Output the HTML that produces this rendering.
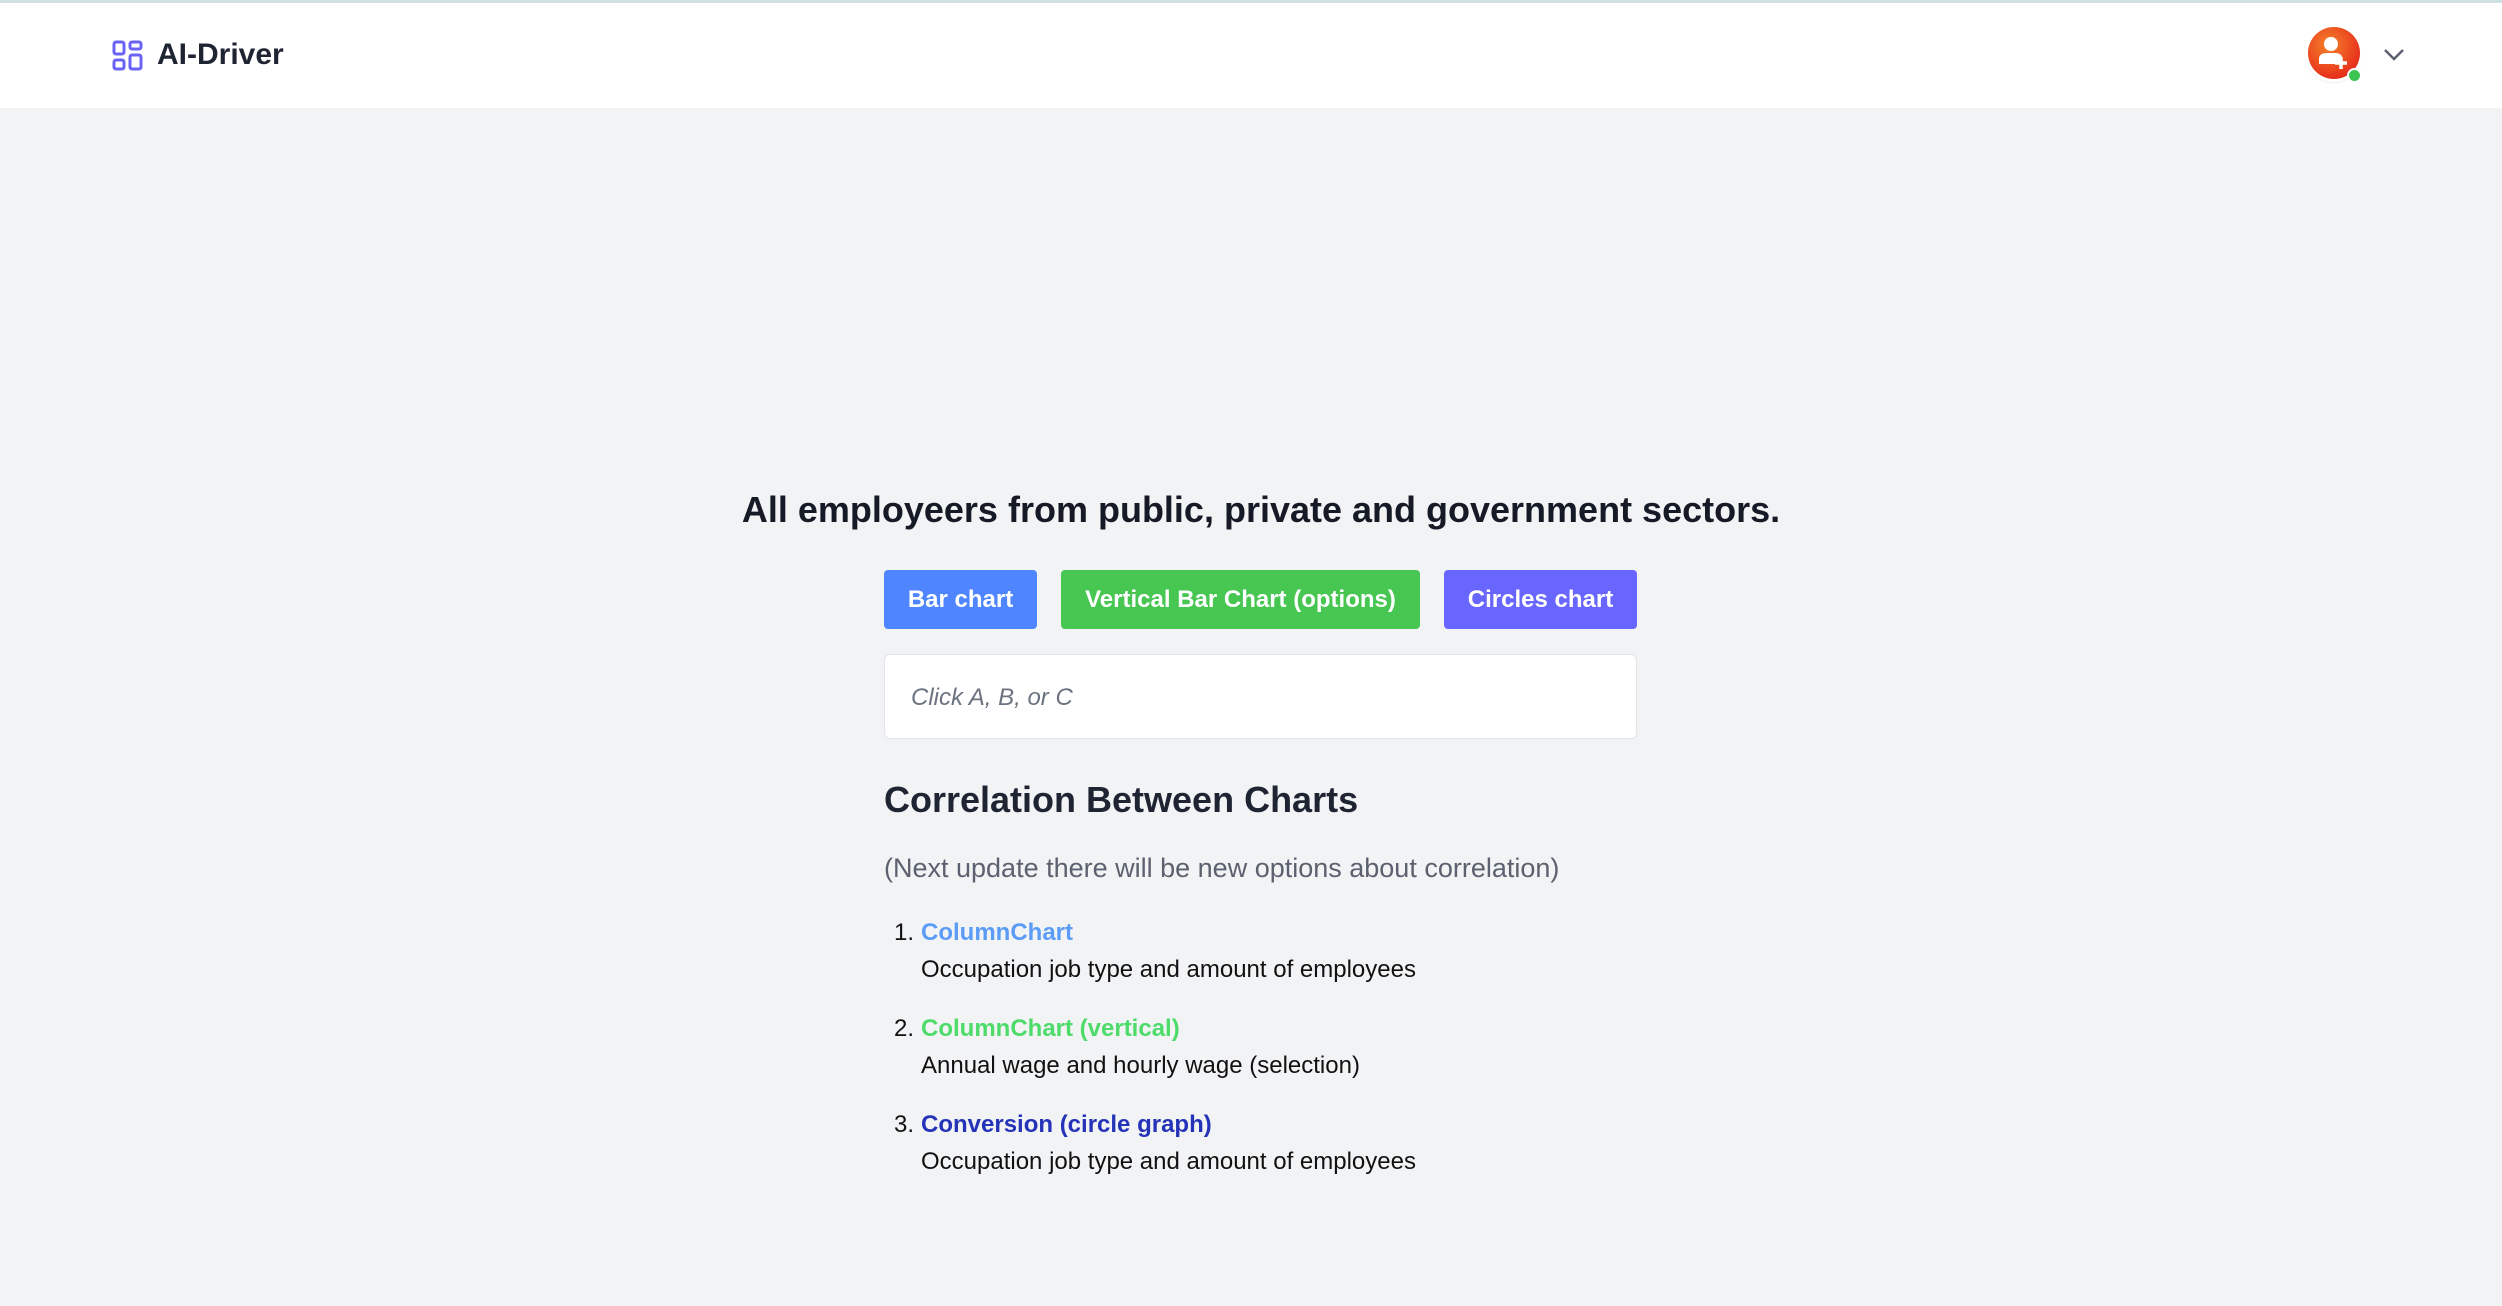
<!DOCTYPE html>
<html><head><meta charset="utf-8"><style>
*{margin:0;padding:0;box-sizing:border-box}
body{width:2502px;height:1306px;background:#f2f3f5;font-family:"Liberation Sans",Arial,sans-serif;position:relative;overflow:hidden;color:#1f2433}
.hdr{position:absolute;left:0;top:0;width:2502px;height:108px;background:#fff;border-top:3px solid #cfe0e0}
.logo{position:absolute;left:112px;top:37px}
.brand{position:absolute;left:157px;top:35px;font-size:30px;font-weight:bold;color:#1f2433}
.av{position:absolute;left:2308px;top:27px;width:52px;height:52px;border-radius:50%;background:radial-gradient(circle at 40% 35%,#f5832a,#e8321c 70%,#c41f12);box-shadow:0 0 0 3px #fff,0 2px 4px rgba(0,0,0,.2)}
.dot{position:absolute;left:2347px;top:68px;width:15px;height:15px;border-radius:50%;background:#3cc552;border:2px solid #fff}
.chev{position:absolute;left:2383px;top:48px}
h1{position:absolute;left:0;width:2522px;top:489px;text-align:center;font-size:36px;font-weight:bold;color:#151a26}
.btn{position:absolute;top:570px;height:59px;border-radius:4px;color:#fff;font-weight:bold;font-size:24px;line-height:59px;text-align:center}
.inp{position:absolute;left:884px;top:654px;width:753px;height:85px;background:#fff;border:1px solid #e3e5e8;border-radius:6px;font-style:italic;font-size:24px;color:#6b7280;padding-left:26px;line-height:85px}
h2{position:absolute;left:884px;top:779px;font-size:36px;font-weight:bold;color:#1f2433}
.p{position:absolute;left:884px;top:853px;font-size:27px;color:#5b616e}
.li{position:absolute;left:894px;font-size:24px;color:#111}
.li b{position:absolute;left:27px;white-space:nowrap;top:0}
.li span{position:absolute;left:27px;top:37px;white-space:nowrap}
</style></head><body>
<div class="hdr">
<svg class="logo" width="31" height="31" viewBox="0 0 31 31" fill="none" stroke="#6a63f6" stroke-width="3"><rect x="2" y="2" width="10" height="12" rx="2"/><rect x="18" y="2" width="11" height="7" rx="2"/><rect x="2" y="20" width="10" height="9" rx="2"/><rect x="18" y="15" width="11" height="14" rx="2"/></svg>
<div class="brand">AI-Driver</div>
</div>
<div class="av"><svg width="52" height="52" viewBox="0 0 52 52"><circle cx="23" cy="17" r="7" fill="#fff"/><path d="M11 37v-5q0-6 8-6h8q6 0 7 4v7z" fill="#fff"/><path d="M33 30v12M27 36h12" stroke="#fff" stroke-width="3.5"/></svg></div>
<div class="dot"></div>
<svg class="chev" width="22" height="14" viewBox="0 0 22 14"><path d="M2 2l9 9 9-9" fill="none" stroke="#5b616e" stroke-width="2.5"/></svg>
<h1>All employeers from public, private and government sectors.</h1>
<div class="btn" style="left:884px;width:153px;background:#4f86ff">Bar chart</div>
<div class="btn" style="left:1061px;width:359px;background:#47c752">Vertical Bar Chart (options)</div>
<div class="btn" style="left:1444px;width:193px;background:#6965ff">Circles chart</div>
<div class="inp">Click A, B, or C</div>
<h2>Correlation Between Charts</h2>
<div class="p">(Next update there will be new options about correlation)</div>
<div class="li" style="top:919px">1.<b style="color:#5b9cf6">ColumnChart</b><span>Occupation job type and amount of employees</span></div>
<div class="li" style="top:1015px">2.<b style="color:#4ddb6a">ColumnChart (vertical)</b><span>Annual wage and hourly wage (selection)</span></div>
<div class="li" style="top:1111px">3.<b style="color:#2433b8">Conversion (circle graph)</b><span>Occupation job type and amount of employees</span></div>
</body></html>
